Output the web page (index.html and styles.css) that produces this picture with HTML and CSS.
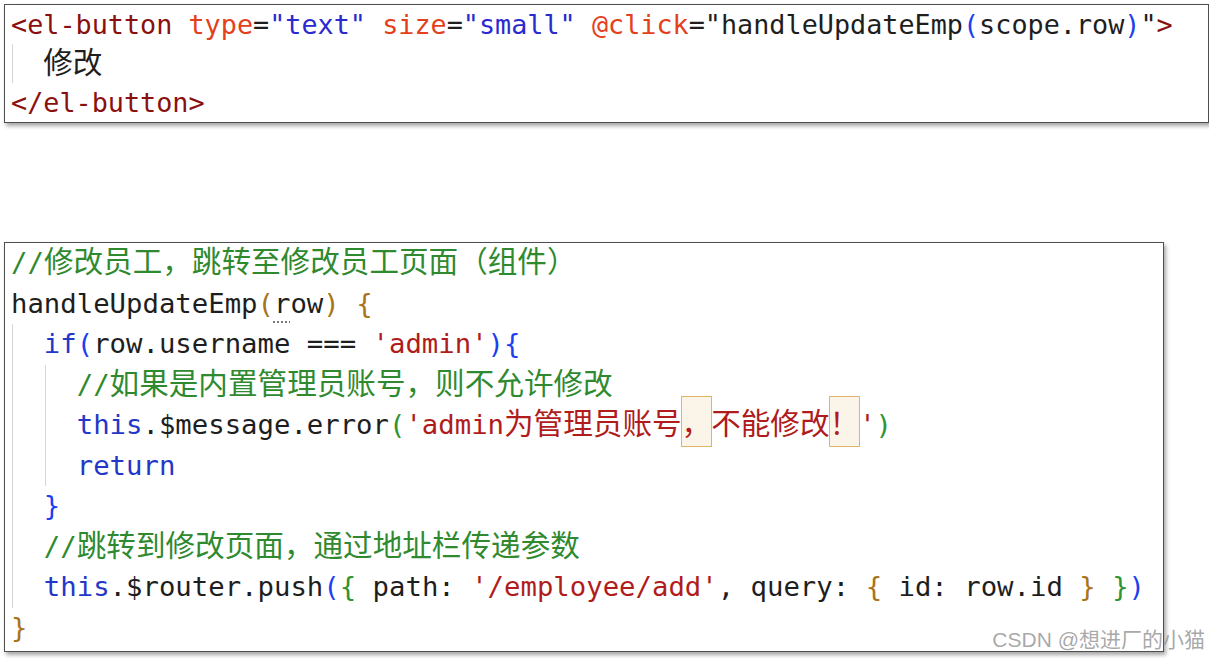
FILE: index.html
```html
<!DOCTYPE html>
<html>
<head>
    <title>修改员工</title>
    <meta charset="utf-8">
    <link rel="stylesheet" href="styles.css">
</head>
<body>
    <div class="code code-top">
        <div class="line"><span class="tag">&lt;el-button</span> <span class="attr">type</span>=<span class="val">"text"</span> <span class="attr">size</span>=<span class="val">"small"</span> <span class="attr">@click</span>="handleUpdateEmp<span class="b2">(</span>scope.row<span class="b2">)</span>"<span class="tag">&gt;</span></div>
        <div class="line"><span class="guide"></span><span class="cn">修改</span></div>
        <div class="line"><span class="tag">&lt;/el-button&gt;</span></div>
    </div>

    <div class="code code-bottom">
        <div class="line"><span class="comment">//<span class="cn">修改员工，跳转至修改员工页面（组件）</span></span></div>
        <div class="line">handleUpdateEmp<span class="b1">(</span><span class="unused">r</span>ow<span class="b1">)</span> <span class="b1">{</span></div>
        <div class="line"><span class="guide"></span><span class="kw">if</span><span class="b2">(</span>row.username === <span class="str">'admin'</span><span class="b2">){</span></div>
        <div class="line"><span class="guide"></span><span class="guide"></span><span class="comment">//<span class="cn">如果是内置管理员账号，则不允许修改</span></span></div>
        <div class="line"><span class="guide"></span><span class="guide"></span><span class="kw">this</span>.$message.error<span class="b3">(</span><span class="str">'admin<span class="cn">为管理员账号<span class="amb">，</span>不能修改<span class="amb">！</span></span>'</span><span class="b3">)</span></div>
        <div class="line"><span class="guide"></span><span class="guide"></span><span class="kw">return</span></div>
        <div class="line"><span class="guide"></span><span class="b2">}</span></div>
        <div class="line"><span class="guide"></span><span class="comment">//<span class="cn">跳转到修改页面，通过地址栏传递参数</span></span></div>
        <div class="line"><span class="guide"></span><span class="kw">this</span>.$router.push<span class="b2">(</span><span class="b3">{</span> path: <span class="str">'/employee/add'</span>, query: <span class="b1">{</span> id: row.id <span class="b1">}</span> <span class="b3">}</span><span class="b2">)</span></div>
        <div class="line"><span class="b1">}</span></div>
    </div>

    <div class="watermark">CSDN @想进厂的小猫</div>
</body>
</html>
```

FILE: styles.css
```css
html, body { margin: 0; padding: 0; background: #fff; }
body { position: relative; height: 659px; overflow: hidden; padding: 4px 0 0 4px; box-sizing: border-box; }

.code { font-family: "DejaVu Sans Mono", "Liberation Mono", "Noto Sans CJK SC", monospace; color: #1e1e1e;
        background: #fff; border: 1px solid #4e4e4e; box-shadow: 2px 3px 4px rgba(0,0,0,0.35);
        padding-left: 6px; box-sizing: border-box; }
.code-top { width: 1205px; font-size: 26.8px; line-height: 39px; }
.code-top .line { height: 39px; }
.code-top .guide { height: 39px; }
.code-bottom { width: 1160px; margin-top: 119px; font-size: 27.3px; line-height: 40.5px; padding-bottom: 3px; }
.code-bottom .line { height: 40.5px; }
.code-bottom .guide { height: 40.5px; }

.line { white-space: pre; }

.guide { display: inline-block; width: 2ch; vertical-align: top; border-left: 1px solid #d6d6d6;
         box-sizing: border-box; margin-left: 1px; margin-right: -1px; }

.cn { font-family: "Noto Sans CJK SC", sans-serif; font-size: 29.6px; line-height: 1; }

.tag { color: #8a1010; }
.attr { color: #e5401c; }
.val { color: #2a2ad0; }
.kw { color: #2338c8; }
.str { color: #b01c1c; }
.comment { color: #2f8a2f; }
.b1 { color: #a8741a; }
.b2 { color: #1d3ff0; }
.b3 { color: #319331; }

.unused { text-decoration: underline dotted #777; text-underline-offset: 9px; text-decoration-thickness: 2px; }

.amb { border: 1px solid #e2b468; background: #fbf4e9; padding: 3px 0; margin: 0 -1px; }

.watermark { position: absolute; right: 4px; bottom: 6px; font-family: "Liberation Sans", "Noto Sans CJK SC", sans-serif;
             font-size: 21px; color: rgba(140,140,140,0.75); }
```
